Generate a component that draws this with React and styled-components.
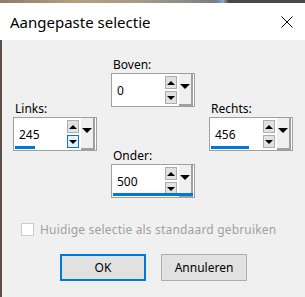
import React from 'react';
import styled, { createGlobalStyle } from 'styled-components';

const GlobalStyle = createGlobalStyle`
  html, body {
    margin: 0;
    padding: 0;
    background: #f0f0f0;
  }
  body {
    font-family: "Noto Sans", "Open Sans", sans-serif;
    font-size: 12px;
    color: #000;
  }
`;

const Window = styled.div`
  width: 305px;
  height: 297px;
  display: flex;
  flex-direction: column;
  overflow: hidden;
  background: #f0f0f0;
`;

const Backdrop = styled.div`
  height: 3px;
  flex: none;
  background: linear-gradient(90deg, #8c7d68 0%, #b4a27e 25%, #a79a83 45%, #8e8c88 60%, #7d7b78 70%, #6a8fc4 72%, #9aa9bc 73%, #4a4a4a 75%, #4a4a4a 100%);
`;

const TitleBar = styled.div`
  height: 37px;
  flex: none;
  display: flex;
  align-items: center;
  justify-content: space-between;
  padding: 0 12px 0 10px;
  background: #fff;
`;

const Title = styled.span`
  font-size: 15px;
  color: #000;
`;

const CloseIcon = () => (
  <svg width="12" height="12" viewBox="0 0 12 12">
    <path d="M0.5 0.5 L11.5 11.5 M11.5 0.5 L0.5 11.5" stroke="#000" strokeWidth="1" fill="none" />
  </svg>
);

const Body = styled.div`
  flex: 1;
  display: flex;
  flex-direction: column;
  border-left: 2px solid #5a4f45;
  padding: 17px 0 0 11px;
`;

const FieldGrid = styled.div`
  display: grid;
  grid-template-columns: repeat(3, 84px);
  grid-template-rows: 44px 10px 37px 53px;
  column-gap: 14px;
`;

const Field = styled.div`
  grid-column: ${p => p.col};
  grid-row: ${p => p.row};
  display: flex;
  flex-direction: column;
`;

const Label = styled.label`
  line-height: 16px;
  height: 16px;
  padding-left: 2px;
`;

const SpinBox = styled.div`
  position: relative;
  height: 34px;
  flex: none;
  display: flex;
  align-items: center;
  background: #fff;
  border: 1px solid #a0a0a0;
  box-sizing: border-box;
`;

const Value = styled.span`
  flex: 1;
  padding-left: 5px;
  padding-top: 1px;
`;

const Steppers = styled.div`
  display: flex;
  flex-direction: column;
  gap: 2px;
  margin-right: 2px;
`;

const Step = styled.div`
  width: 12px;
  height: 13px;
  box-sizing: border-box;
  display: flex;
  align-items: center;
  justify-content: center;
  background: ${p => (p.hover ? '#e5f1fb' : '#e1e1e1')};
  border: 1px solid ${p => (p.hover ? '#0078d7' : '#adadad')};
`;

const Arrow = styled.div`
  width: 0;
  height: 0;
  border-left: ${p => p.size}px solid transparent;
  border-right: ${p => p.size}px solid transparent;
  ${p => (p.up ? 'border-bottom' : 'border-top')}: ${p => p.size}px solid #000;
`;

const DropButton = styled.div`
  align-self: stretch;
  width: 14px;
  margin: 0 1px 0 0;
  display: flex;
  justify-content: center;
  padding-top: 10px;
  box-sizing: border-box;
  background: #f0f0f0;
  border-right: 2px solid #a0a0a0;
  border-bottom: 2px solid #a0a0a0;
`;

const ValueBar = styled.div`
  position: absolute;
  left: 1px;
  bottom: 1px;
  height: 3px;
  background: #0078d7;
`;

const CheckRow = styled.div`
  display: flex;
  align-items: center;
  gap: 6px;
  margin: 20px 0 0 8px;
  color: #a0a0a0;
  letter-spacing: 0.18px;
`;

const CheckBox = styled.div`
  width: 13px;
  height: 13px;
  box-sizing: border-box;
  border: 1px solid #cccccc;
  background: #fff;
`;

const Buttons = styled.div`
  display: flex;
  gap: 15px;
  margin: 16px 0 0 47px;
`;

const Button = styled.div`
  width: 86px;
  height: 27px;
  box-sizing: border-box;
  display: flex;
  align-items: center;
  justify-content: center;
  background: #e1e1e1;
  border: ${p => (p.primary ? '2px solid #0078d7' : '1px solid #adadad')};
`;

const fields = [
  { name: 'Boven:', value: '0', col: 2, row: '1 / 3', bar: 0 },
  { name: 'Links:', value: '245', col: 1, row: '2 / 4', bar: 20, hoverDown: true },
  { name: 'Rechts:', value: '456', col: 3, row: '2 / 4', bar: 38 },
  { name: 'Onder:', value: '500', col: 2, row: '4 / 5', bar: 80 },
];

const Spinner = ({ f }) => (
  <Field col={f.col} row={f.row}>
    <Label>{f.name}</Label>
    <SpinBox>
      <Value>{f.value}</Value>
      <Steppers>
        <Step><Arrow up size={4} /></Step>
        <Step hover={f.hoverDown}><Arrow size={4} /></Step>
      </Steppers>
      <DropButton><Arrow size={5} /></DropButton>
      {f.bar > 0 && <ValueBar style={{ width: f.bar }} />}
    </SpinBox>
  </Field>
);

export default function App() {
  return (
    <Window>
      <GlobalStyle />
      <Backdrop />
      <TitleBar>
        <Title>Aangepaste selectie</Title>
        <CloseIcon />
      </TitleBar>
      <Body>
        <FieldGrid>
          {fields.map(f => <Spinner key={f.name} f={f} />)}
        </FieldGrid>
        <CheckRow>
          <CheckBox />
          <span>Huidige selectie als standaard gebruiken</span>
        </CheckRow>
        <Buttons>
          <Button primary>OK</Button>
          <Button>Annuleren</Button>
        </Buttons>
      </Body>
    </Window>
  );
}
